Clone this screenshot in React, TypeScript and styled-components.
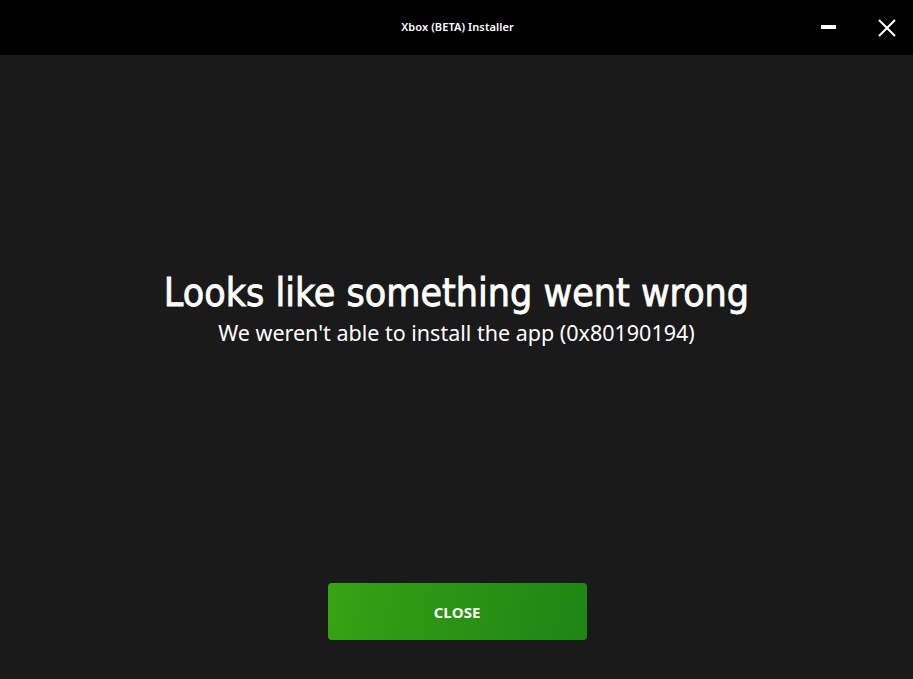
import React from "react";
import styled, { createGlobalStyle } from "styled-components";

const Global = createGlobalStyle`
  html, body { margin: 0; padding: 0; background: #1a1a1a; }
  #root { height: 679px; }
`;

const Window = styled.div`
  width: 913px;
  height: 679px;
  display: flex;
  flex-direction: column;
  background: #1a1a1a;
  font-family: "Noto Sans", "Open Sans", sans-serif;
  color: #fff;
  overflow: hidden;
`;

const TitleBar = styled.header`
  height: 55px;
  flex: none;
  background: #000;
  display: grid;
  grid-template-columns: 1fr auto 1fr;
  align-items: center;
`;

const WindowTitle = styled.div`
  grid-column: 2;
  font-size: 11px;
  font-weight: 600;
  letter-spacing: 0.1px;
  color: #fff;
  padding-left: 2px;
  margin-top: -3px;
`;

const Controls = styled.div`
  grid-column: 3;
  justify-self: end;
  display: flex;
  align-items: center;
  gap: 42px;
  padding-right: 17px;
`;

const CtrlButton = styled.button<{ $lift?: number }>`
  background: none;
  border: none;
  padding: 0;
  display: flex;
  color: #fff;
  cursor: pointer;
  margin-bottom: ${(p) => p.$lift ?? 0}px;
`;

const Main = styled.main`
  flex: 1;
  display: flex;
  flex-direction: column;
  align-items: center;
  padding: 214px 0 39px;
`;

const Heading = styled.h1`
  margin: 0;
  font-family: "DejaVu Sans", "Noto Sans", sans-serif;
  font-stretch: condensed;
  font-size: 39px;
  font-weight: 400;
  -webkit-text-stroke: 0.8px #fff;
  line-height: 48px;
  letter-spacing: 0px;
  text-align: center;
`;

const Sub = styled.p`
  margin: 0;
  font-size: 21.5px;
  font-weight: 400;
  line-height: 28px;
  text-align: center;
  margin-top: 2px;
`;

const Spacer = styled.div`
  flex: 1;
`;

const PrimaryButton = styled.button`
  width: 259px;
  height: 57px;
  border: none;
  border-radius: 4px;
  background: linear-gradient(100deg, #37a314 0%, #2b9413 45%, #1e8616 100%);
  color: #fff;
  font-family: "Open Sans", "Noto Sans", sans-serif;
  font-size: 15px;
  font-weight: 700;
  cursor: pointer;
  margin-left: 1px;
`;

export default function App() {
  return (
    <>
      <Global />
      <Window>
        <TitleBar>
          <WindowTitle>Xbox (BETA) Installer</WindowTitle>
          <Controls>
            <CtrlButton aria-label="Minimize" $lift={2}>
              <svg width="15" height="4" viewBox="0 0 15 4">
                <rect x="0" y="0" width="15" height="4" fill="#fff" />
              </svg>
            </CtrlButton>
            <CtrlButton aria-label="Close">
              <svg width="18" height="18" viewBox="0 0 18 18">
                <path d="M1 1 L17 17 M17 1 L1 17" stroke="#fff" strokeWidth="2" />
              </svg>
            </CtrlButton>
          </Controls>
        </TitleBar>
        <Main>
          <Heading>Looks like something went wrong</Heading>
          <Sub>We weren't able to install the app (0x80190194)</Sub>
          <Spacer />
          <PrimaryButton>CLOSE</PrimaryButton>
        </Main>
      </Window>
    </>
  );
}
